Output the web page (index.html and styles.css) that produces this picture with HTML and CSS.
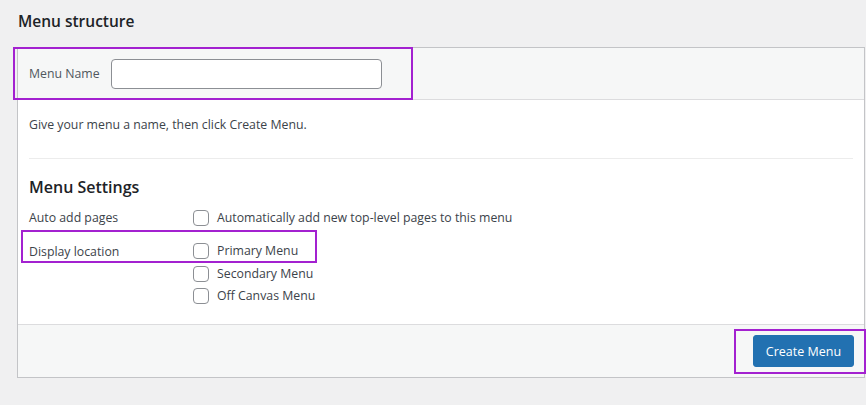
FILE: index.html
```html
<!DOCTYPE html>
<html>
<head>
<meta charset="utf-8">
<link rel="stylesheet" href="styles.css">
</head>
<body>
<div class="page">
  <h2 class="title">Menu structure</h2>
  <div class="box">
    <div class="header">
      <label class="name-label">Menu Name</label>
      <input class="name-input" type="text">
      <div class="hl hl-header"></div>
    </div>
    <div class="content">
      <p class="hint">Give your menu a name, then click Create Menu.</p>
      <div class="sep"></div>
      <h3 class="settings-title">Menu Settings</h3>
      <div class="settings">
        <div class="row">
          <div class="row-label">Auto add pages</div>
          <div class="opts">
            <label class="opt"><span class="cb"></span>Automatically add new top-level pages to this menu</label>
          </div>
        </div>
        <div class="row row-loc">
          <div class="row-label">Display location</div>
          <div class="opts">
            <label class="opt"><span class="cb"></span>Primary Menu</label>
            <label class="opt"><span class="cb"></span>Secondary Menu</label>
            <label class="opt"><span class="cb"></span>Off Canvas Menu</label>
          </div>
          <div class="hl hl-loc"></div>
        </div>
      </div>
    </div>
    <div class="footer">
      <button class="btn">Create Menu</button>
      <div class="hl hl-btn"></div>
    </div>
  </div>
</div>
</body>
</html>
```

FILE: styles.css
```css
* { box-sizing: border-box; }
html, body { margin: 0; padding: 0; }
body {
  background: #f0f0f1;
  font-family: "Open Sans", "Noto Sans", sans-serif;
  font-size: 12.3px;
  color: #3c434a;
  width: 866px;
  height: 405px;
  overflow: hidden;
}
.page { padding: 10px 0 0 17px; }
.title {
  margin: 0 0 0 1px;
  font-size: 15.5px;
  font-weight: 600;
  color: #1d2327;
  line-height: 22px;
  height: 37px;
}
.box {
  width: 848px;
  border: 1px solid #c3c4c7;
  background: #fff;
}
.header {
  position: relative;
  height: 52px;
  background: #f6f7f7;
  border-bottom: 1px solid #dcdcde;
  display: flex;
  align-items: center;
  padding: 0 0 0 11px;
}
.name-label { color: #50575e; margin-right: 11px; }
.name-input {
  width: 271px;
  height: 30px;
  border: 1px solid #8c8f94;
  border-radius: 4px;
  background: #fff;
  margin: 1px 0 0 0;
}
.hl {
  position: absolute;
  border: 2px solid #a321d0;
  pointer-events: none;
}
.hl-header { left: -5px; top: -1px; width: 400px; height: 53px; }
.content { padding: 16px 11px 19px 11px; }
.hint { margin: 0; line-height: 18px; }
.sep { border-top: 1px solid #ececec; margin: 24px 0 0 0; }
.settings-title {
  margin: 17px 0 11px;
  font-size: 16px;
  font-weight: 600;
  color: #1d2327;
  line-height: 22px;
}
.row { display: flex; position: relative; }
.row-label { width: 164px; line-height: 18px; padding-top: 0; }
.row-loc { margin-top: 15px; }
.row-loc .row-label { padding-top: 1px; }
.opts { display: flex; flex-direction: column; gap: 4.5px; }
.opt { display: flex; align-items: center; line-height: 18px; }
.cb {
  width: 16px; height: 16px;
  border: 1px solid #8c8f94;
  border-radius: 4px;
  background: #fff;
  margin-right: 8px;
  flex: none;
}
.hl-loc { left: -8px; top: -12px; width: 296px; height: 33px; }
.footer {
  position: relative;
  height: 53px;
  background: #f6f7f7;
  border-top: 1px solid #dcdcde;
  display: flex;
  justify-content: flex-end;
  align-items: flex-start;
  padding: 10px 10px 0 0;
}
.btn {
  width: 101px;
  height: 32px;
  background: #2271b1;
  color: #fff;
  border: 1px solid #2271b1;
  border-radius: 3px;
  font-family: inherit;
  font-size: 12.5px;
  padding: 0;
}
.hl-btn { right: -2px; top: 4px; width: 132px; height: 45px; }
```
